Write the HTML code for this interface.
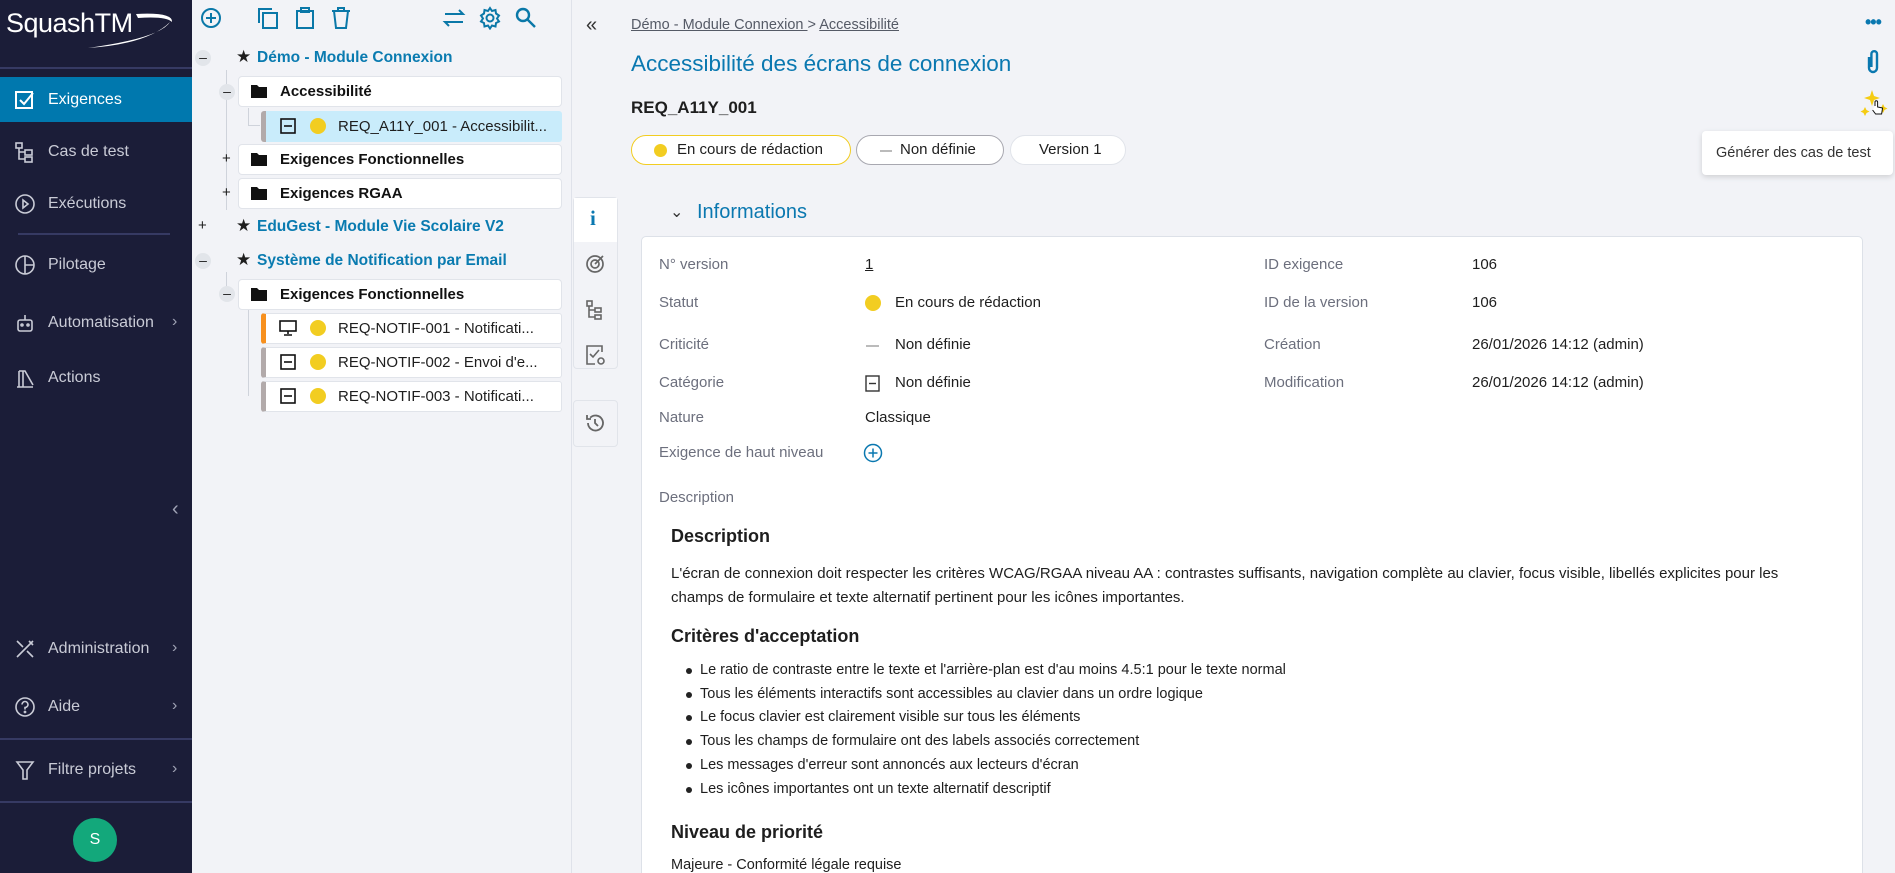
<!DOCTYPE html>
<html><head><meta charset="utf-8"><style>
*{box-sizing:border-box;margin:0;padding:0}
html{width:1895px;height:873px;overflow:hidden}
body{width:1895px;height:873px;overflow:hidden;background:#f2f3f7;font-family:"Liberation Sans",sans-serif;position:relative;color:#1e1e1e}
.a{position:absolute;white-space:nowrap}
#sb{left:0;top:0;width:192px;height:873px;background:#1b1d38}
.nav{color:#c9cbd6;font-size:16px;left:48px}
.ico{left:14px;width:22px;height:22px}
.chev{left:172px;color:#a0a3b5;font-size:16px}
.hl{background:#363a63;height:2px}
#tree{left:192px;top:0;width:380px;height:873px;background:#f2f3f7;border-right:1px solid #dfe2ea}
.node{font-size:15px}
.box{background:#fff;border:1px solid #e1e4ea;border-radius:4px;height:31px}
.proj{color:#0a7bb0;font-size:15.5px;font-weight:bold}
.fold{font-size:15px;font-weight:bold;color:#111}
.dot{width:16px;height:16px;border-radius:50%;background:#f2cd21}
.lab{color:#6c6f7d;font-size:15px}
.val{color:#1e1e1e;font-size:15px}
.li{font-size:14.5px;left:700px}
.bul{left:686px;width:6px;height:6px;border-radius:50%;background:#222}
</style></head><body>
<div id="sb" class="a">
 <div class="a" style="left:6px;top:8px;color:#fff;font-size:27px;letter-spacing:-0.5px">SquashTM</div>
 <svg class="a" style="left:78px;top:8px" width="100" height="44"><path d="M10 40 Q70 36 92 14 Q82 30 10 40Z" fill="#fff"/><path d="M58 6 Q95 4 94 14 Q88 8 60 10Z" fill="#fff"/></svg>
 <div class="a hl" style="left:0;top:67px;width:192px"></div>
 <div class="a" style="left:0;top:77px;width:192px;height:45px;background:#0078ae"></div>
 <svg class="a ico" style="top:89px" viewBox="0 0 22 22"><rect x="2" y="3" width="16" height="16" fill="none" stroke="#fff" stroke-width="2"/><path d="M6 11l4 4 9-11" fill="none" stroke="#fff" stroke-width="2"/></svg>
 <div class="a nav" style="top:91px;color:#fff">Exigences</div>
 <svg class="a ico" style="top:141px" viewBox="0 0 22 22" fill="none" stroke="#c9cbd6" stroke-width="1.6"><rect x="2" y="2" width="6" height="5"/><rect x="11" y="9" width="7" height="5"/><rect x="11" y="16" width="7" height="5"/><path d="M5 7v11h6M5 11h6"/></svg>
 <div class="a nav" style="top:143px">Cas de test</div>
 <svg class="a ico" style="top:193px" viewBox="0 0 22 22" fill="none" stroke="#c9cbd6" stroke-width="1.6"><circle cx="11" cy="11" r="9"/><path d="M9 7l5 4-5 4z"/></svg>
 <div class="a nav" style="top:195px">Exécutions</div>
 <div class="a hl" style="left:18px;top:233px;width:152px"></div>
 <svg class="a ico" style="top:254px" viewBox="0 0 22 22" fill="none" stroke="#c9cbd6" stroke-width="1.6"><circle cx="11" cy="11" r="9"/><path d="M11 2v18M11 11h9"/></svg>
 <div class="a nav" style="top:256px">Pilotage</div>
 <svg class="a ico" style="top:312px" viewBox="0 0 22 22" fill="none" stroke="#c9cbd6" stroke-width="1.6"><rect x="4" y="8" width="14" height="11" rx="2"/><path d="M11 3v5"/><circle cx="8" cy="13" r="1"/><circle cx="14" cy="13" r="1"/></svg>
 <div class="a nav" style="top:314px">Automatisation</div><div class="a chev" style="top:313px">›</div>
 <svg class="a ico" style="top:367px" viewBox="0 0 22 22" fill="none" stroke="#c9cbd6" stroke-width="1.6"><path d="M3 20h16M5 4v16M9 4v16M5 4h6l8 14"/></svg>
 <div class="a nav" style="top:369px">Actions</div>
 <div class="a" style="left:172px;top:498px;color:#a0a3b5;font-size:20px">‹</div>
 <svg class="a ico" style="top:638px" viewBox="0 0 22 22" fill="none" stroke="#c9cbd6" stroke-width="1.6"><path d="M3 19L19 3M3 3l6 6M13 13l6 6M15 3l4 4"/></svg>
 <div class="a nav" style="top:640px">Administration</div><div class="a chev" style="top:639px">›</div>
 <svg class="a ico" style="top:696px" viewBox="0 0 22 22" fill="none" stroke="#c9cbd6" stroke-width="1.6"><circle cx="11" cy="11" r="9"/><path d="M8 8.5a3 3 0 1 1 3 3v2"/><circle cx="11" cy="16" r=".6"/></svg>
 <div class="a nav" style="top:698px">Aide</div><div class="a chev" style="top:697px">›</div>
 <div class="a hl" style="left:0;top:738px;width:192px"></div>
 <svg class="a ico" style="top:759px" viewBox="0 0 22 22" fill="none" stroke="#c9cbd6" stroke-width="1.6"><path d="M3 3h16l-6 8v9h-4v-9z"/></svg>
 <div class="a nav" style="top:761px">Filtre projets</div><div class="a chev" style="top:760px">›</div>
 <div class="a hl" style="left:0;top:801px;width:192px"></div>
 <div class="a" style="left:73px;top:818px;width:44px;height:44px;border-radius:50%;background:#13a87b;color:#fff;font-size:16px;text-align:center;line-height:44px">S</div>
</div>

<div id="tree" class="a">
 <svg class="a" style="left:8px;top:7px" width="22" height="22" fill="none" stroke="#0a78a8" stroke-width="2"><circle cx="11" cy="11" r="9"/><path d="M11 6v10M6 11h10"/></svg>
 <svg class="a" style="left:64px;top:6px" width="24" height="24" fill="none" stroke="#0a78a8" stroke-width="2"><rect x="7" y="7" width="14" height="15"/><path d="M3 17V3h13"/></svg>
 <svg class="a" style="left:101px;top:6px" width="24" height="24" fill="none" stroke="#0a78a8" stroke-width="2"><rect x="4" y="5" width="16" height="17"/><rect x="8" y="2" width="8" height="4"/></svg>
 <svg class="a" style="left:137px;top:6px" width="24" height="24" fill="none" stroke="#0a78a8" stroke-width="2"><path d="M3 5h18M9 5V2h6v3M5 5l2 17h10l2-17"/></svg>
 <svg class="a" style="left:250px;top:6px" width="24" height="24" fill="none" stroke="#0a78a8" stroke-width="2"><path d="M3 8h18l-4-4M21 16H3l4 4"/></svg>
 <svg class="a" style="left:286px;top:6px" width="24" height="24" fill="none" stroke="#0a78a8" stroke-width="2"><circle cx="12" cy="12" r="3.5"/><path d="M12 2l2 3 3.5-1 .5 3.5 3 2-2 3 2 3-3 1.5-.5 3.5-3.5-1-2 3-2-3-3.5 1-.5-3.5-3-1.5 2-3-2-3 3-2 .5-3.5 3.5 1z"/></svg>
 <svg class="a" style="left:322px;top:6px" width="24" height="24" fill="none" stroke="#0a78a8" stroke-width="2.4"><circle cx="9" cy="9" r="6"/><path d="M13.5 13.5L21 21"/></svg>

 <div class="a" style="left:34px;top:70px;width:1px;height:140px;background:#cfd3db"></div>
 <div class="a" style="left:56px;top:108px;width:1px;height:18px;background:#cfd3db"></div>
 <div class="a" style="left:56px;top:125px;width:12px;height:1px;background:#cfd3db"></div>
 <div class="a" style="left:34px;top:272px;width:1px;height:22px;background:#cfd3db"></div>
 <div class="a" style="left:56px;top:310px;width:1px;height:86px;background:#cfd3db"></div>

 <div class="a" style="left:3px;top:50px;width:16px;height:16px;border-radius:50%;background:#e2e5ea;text-align:center;line-height:15px;font-size:14px">–</div>
 <div class="a" style="left:44px;top:47px;font-size:17px">★</div>
 <div class="a proj" style="left:65px;top:49px">Démo - Module Connexion</div>

 <div class="a box" style="left:46px;top:76px;width:324px"></div>
 <div class="a" style="left:27px;top:84px;width:16px;height:16px;border-radius:50%;background:#e2e5ea;text-align:center;line-height:15px;font-size:14px">–</div>
 <svg class="a" style="left:59px;top:84px" width="16" height="14"><path d="M0 1h6l2 2h8v11H0z" fill="#111"/></svg>
 <div class="a fold" style="left:88px;top:83px">Accessibilité</div>

 <div class="a" style="left:69px;top:111px;width:301px;height:31px;background:#c9ecfb;border-left:5px solid #b2aaaa;border-radius:3px"></div>
 <svg class="a" style="left:88px;top:118px" width="16" height="16" fill="none" stroke="#111" stroke-width="1.6"><rect x="1" y="1" width="14" height="14"/><path d="M4 8h8"/></svg>
 <div class="a dot" style="left:118px;top:118px"></div>
 <div class="a node" style="left:146px;top:118px">REQ_A11Y_001 - Accessibilit...</div>

 <div class="a box" style="left:46px;top:144px;width:324px"></div>
 <div class="a" style="left:30px;top:150px;font-size:15px">+</div>
 <svg class="a" style="left:59px;top:152px" width="16" height="14"><path d="M0 1h6l2 2h8v11H0z" fill="#111"/></svg>
 <div class="a fold" style="left:88px;top:151px">Exigences Fonctionnelles</div>

 <div class="a box" style="left:46px;top:178px;width:324px"></div>
 <div class="a" style="left:30px;top:184px;font-size:15px">+</div>
 <svg class="a" style="left:59px;top:186px" width="16" height="14"><path d="M0 1h6l2 2h8v11H0z" fill="#111"/></svg>
 <div class="a fold" style="left:88px;top:185px">Exigences RGAA</div>

 <div class="a" style="left:6px;top:217px;font-size:15px">+</div>
 <div class="a" style="left:44px;top:216px;font-size:17px">★</div>
 <div class="a proj" style="left:65px;top:218px">EduGest - Module Vie Scolaire V2</div>

 <div class="a" style="left:3px;top:253px;width:16px;height:16px;border-radius:50%;background:#e2e5ea;text-align:center;line-height:15px;font-size:14px">–</div>
 <div class="a" style="left:44px;top:250px;font-size:17px">★</div>
 <div class="a proj" style="left:65px;top:252px">Système de Notification par Email</div>

 <div class="a box" style="left:46px;top:279px;width:324px"></div>
 <div class="a" style="left:27px;top:286px;width:16px;height:16px;border-radius:50%;background:#e2e5ea;text-align:center;line-height:15px;font-size:14px">–</div>
 <svg class="a" style="left:59px;top:287px" width="16" height="14"><path d="M0 1h6l2 2h8v11H0z" fill="#111"/></svg>
 <div class="a fold" style="left:88px;top:286px">Exigences Fonctionnelles</div>

 <div class="a" style="left:69px;top:313px;width:301px;height:31px;background:#fff;border:1px solid #e1e4ea;border-left:5px solid #f7901e;border-radius:3px"></div>
 <svg class="a" style="left:87px;top:320px" width="18" height="16" fill="none" stroke="#111" stroke-width="1.6"><rect x="1" y="1" width="16" height="10"/><path d="M9 11v3M5 15h8"/></svg>
 <div class="a dot" style="left:118px;top:320px"></div>
 <div class="a node" style="left:146px;top:320px">REQ-NOTIF-001 - Notificati...</div>

 <div class="a" style="left:69px;top:347px;width:301px;height:31px;background:#fff;border:1px solid #e1e4ea;border-left:5px solid #b2aaaa;border-radius:3px"></div>
 <svg class="a" style="left:88px;top:354px" width="16" height="16" fill="none" stroke="#111" stroke-width="1.6"><rect x="1" y="1" width="14" height="14"/><path d="M4 8h8"/></svg>
 <div class="a dot" style="left:118px;top:354px"></div>
 <div class="a node" style="left:146px;top:354px">REQ-NOTIF-002 - Envoi d'e...</div>

 <div class="a" style="left:69px;top:381px;width:301px;height:31px;background:#fff;border:1px solid #e1e4ea;border-left:5px solid #b2aaaa;border-radius:3px"></div>
 <svg class="a" style="left:88px;top:388px" width="16" height="16" fill="none" stroke="#111" stroke-width="1.6"><rect x="1" y="1" width="14" height="14"/><path d="M4 8h8"/></svg>
 <div class="a dot" style="left:118px;top:388px"></div>
 <div class="a node" style="left:146px;top:388px">REQ-NOTIF-003 - Notificati...</div>
</div>

<div class="a" style="left:586px;top:14px;font-size:20px;color:#333">«</div>
<div class="a" style="left:631px;top:17px;font-size:14.5px;color:#555a66"><u>Démo - Module Connexion </u> &gt; <u>Accessibilité</u></div>
<div class="a" style="left:631px;top:51px;font-size:22.5px;color:#0a78b0">Accessibilité des écrans de connexion</div>
<div class="a" style="left:631px;top:98px;font-size:17px;font-weight:bold">REQ_A11Y_001</div>
<div class="a" style="left:631px;top:135px;width:220px;height:30px;border:1px solid #f2cd21;border-radius:15px;background:#fff"></div>
<div class="a dot" style="left:654px;top:144px;width:13px;height:13px"></div>
<div class="a" style="left:677px;top:141px;font-size:15px">En cours de rédaction</div>
<div class="a" style="left:856px;top:135px;width:148px;height:30px;border:1px solid #a8a8b0;border-radius:15px;background:#fff"></div>
<div class="a" style="left:880px;top:150px;width:12px;height:2px;background:#bbb"></div>
<div class="a" style="left:900px;top:141px;font-size:15px">Non définie</div>
<div class="a" style="left:1010px;top:135px;width:116px;height:30px;border:1px solid #e1e4ea;border-radius:15px;background:#fff"></div>
<div class="a" style="left:1039px;top:141px;font-size:15px">Version 1</div>

<div class="a" style="left:1865px;top:12px;font-size:18px;color:#0a78b0;font-weight:bold;letter-spacing:-1px">•••</div>
<svg class="a" style="left:1864px;top:48px" width="18" height="28" fill="none" stroke="#0a78b0" stroke-width="2.4"><path d="M5 9v11a4 4 0 0 0 8 0V6a2.8 2.8 0 0 0-5.6 0v13"/></svg>
<svg class="a" style="left:1860px;top:88px" width="30" height="32"><path d="M12 2l2 6 6 2-6 2-2 6-2-6-6-2 6-2z" fill="#f5cc12"/><path d="M5 19l1.5 3 3 1.5-3 1.5-1.5 3-1.5-3-3-1.5 3-1.5z" fill="#f5cc12"/><path d="M23 16l1.5 3 3 1.5-3 1.5-1.5 3-1.5-3-3-1.5 3-1.5z" fill="#f5cc12"/><path d="M15 18v-4a1.3 1.3 0 0 1 2.6 0v5l5 1 -1 6h-6l-3-4" fill="#fff" stroke="#111" stroke-width="1"/></svg>
<div class="a" style="left:1702px;top:131px;width:191px;height:44px;background:#fff;border-radius:4px;box-shadow:0 2px 6px rgba(0,0,0,.15)"></div>
<div class="a" style="left:1716px;top:145px;font-size:14.5px;color:#333">Générer des cas de test</div>

<div class="a" style="left:573px;top:197px;width:45px;height:172px;background:#f2f3f7;border:1px solid #e1e4ea;border-radius:4px"></div>
<div class="a" style="left:574px;top:198px;width:43px;height:44px;background:#fff"></div>
<div class="a" style="left:590px;top:206px;font-size:21px;font-weight:bold;color:#0a78b0;font-family:'Liberation Serif',serif">i</div>
<svg class="a" style="left:584px;top:253px" width="22" height="22" fill="none" stroke="#666" stroke-width="1.7"><circle cx="11" cy="11" r="8"/><circle cx="11" cy="11" r="4"/><path d="M11 11l8-8"/></svg>
<svg class="a" style="left:585px;top:299px" width="20" height="22" fill="none" stroke="#666" stroke-width="1.6"><rect x="2" y="2" width="5" height="5"/><rect x="10" y="9" width="6" height="4"/><rect x="10" y="16" width="6" height="4"/><path d="M4 7v11h6M4 11h6"/></svg>
<svg class="a" style="left:585px;top:344px" width="22" height="22" fill="none" stroke="#666" stroke-width="1.6"><path d="M17 8V2H2v18h8"/><path d="M5 10l3 3 6-7"/><circle cx="16" cy="17" r="3"/></svg>
<div class="a" style="left:573px;top:400px;width:45px;height:47px;background:#f2f3f7;border:1px solid #e1e4ea;border-radius:4px"></div>
<svg class="a" style="left:584px;top:412px" width="22" height="22" fill="none" stroke="#666" stroke-width="1.8"><path d="M4 11a7.5 7.5 0 1 0 2.2-5.3M3 3v4h4"/><path d="M11 7v4l3 3"/></svg>

<div class="a" style="left:670px;top:202px;font-size:16px;color:#333">⌄</div>
<div class="a" style="left:697px;top:201px;font-size:20px;color:#0a78b0">Informations</div>

<div class="a" style="left:641px;top:236px;width:1222px;height:650px;background:#fff;border:1px solid #dde1e8;border-radius:5px"></div>

<div class="a lab" style="left:659px;top:256px">N° version</div><div class="a val" style="left:865px;top:256px"><u>1</u></div>
<div class="a lab" style="left:659px;top:294px">Statut</div><div class="a dot" style="left:865px;top:295px"></div><div class="a val" style="left:895px;top:294px">En cours de rédaction</div>
<div class="a lab" style="left:659px;top:336px">Criticité</div><div class="a" style="left:866px;top:345px;width:13px;height:2px;background:#bbb"></div><div class="a val" style="left:895px;top:336px">Non définie</div>
<div class="a lab" style="left:659px;top:374px">Catégorie</div>
<svg class="a" style="left:865px;top:375px" width="16" height="17" fill="none" stroke="#333" stroke-width="1.4"><rect x="1" y="1" width="13" height="15"/><path d="M4 8.5h7"/></svg>
<div class="a val" style="left:895px;top:374px">Non définie</div>
<div class="a lab" style="left:659px;top:409px">Nature</div><div class="a val" style="left:865px;top:409px">Classique</div>
<div class="a lab" style="left:659px;top:444px">Exigence de haut niveau</div>
<svg class="a" style="left:863px;top:443px" width="20" height="20" fill="none" stroke="#0a78b0" stroke-width="1.5"><circle cx="10" cy="10" r="8.5"/><path d="M10 5.5v9M5.5 10h9"/></svg>
<div class="a lab" style="left:659px;top:489px">Description</div>

<div class="a lab" style="left:1264px;top:256px">ID exigence</div><div class="a val" style="left:1472px;top:256px">106</div>
<div class="a lab" style="left:1264px;top:294px">ID de la version</div><div class="a val" style="left:1472px;top:294px">106</div>
<div class="a lab" style="left:1264px;top:336px">Création</div><div class="a val" style="left:1472px;top:336px">26/01/2026 14:12 (admin)</div>
<div class="a lab" style="left:1264px;top:374px">Modification</div><div class="a val" style="left:1472px;top:374px">26/01/2026 14:12 (admin)</div>

<div class="a" style="left:671px;top:526px;font-size:18px;font-weight:bold">Description</div>
<div class="a" style="left:671px;top:562px;font-size:15px;line-height:24px;white-space:normal;width:1140px">L'écran de connexion doit respecter les critères WCAG/RGAA niveau AA : contrastes suffisants, navigation complète au clavier, focus visible, libellés explicites pour les champs de formulaire et texte alternatif pertinent pour les icônes importantes.</div>
<div class="a" style="left:671px;top:626px;font-size:18px;font-weight:bold">Critères d'acceptation</div>
<div class="a bul" style="top:668px"></div><div class="a li" style="top:662px">Le ratio de contraste entre le texte et l'arrière-plan est d'au moins 4.5:1 pour le texte normal</div>
<div class="a bul" style="top:692px"></div><div class="a li" style="top:686px">Tous les éléments interactifs sont accessibles au clavier dans un ordre logique</div>
<div class="a bul" style="top:715px"></div><div class="a li" style="top:709px">Le focus clavier est clairement visible sur tous les éléments</div>
<div class="a bul" style="top:739px"></div><div class="a li" style="top:733px">Tous les champs de formulaire ont des labels associés correctement</div>
<div class="a bul" style="top:763px"></div><div class="a li" style="top:757px">Les messages d'erreur sont annoncés aux lecteurs d'écran</div>
<div class="a bul" style="top:787px"></div><div class="a li" style="top:781px">Les icônes importantes ont un texte alternatif descriptif</div>
<div class="a" style="left:671px;top:822px;font-size:18px;font-weight:bold">Niveau de priorité</div>
<div class="a" style="left:671px;top:857px;font-size:14.5px">Majeure - Conformité légale requise</div>
</body></html>
